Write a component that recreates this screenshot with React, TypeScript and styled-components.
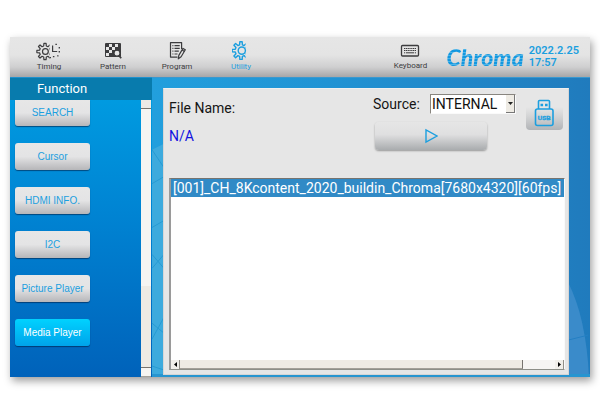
import React from "react";
import styled, { createGlobalStyle, css } from "styled-components";

const BLUE = "#1c9fdf";
const INK = "#3c3c3e";

const GlobalStyle = createGlobalStyle`
  *, *::before, *::after { box-sizing: border-box; }
  body { margin: 0; background: #fff; font-family: Roboto, "Liberation Sans", sans-serif; }
  button, select { font: inherit; margin: 0; padding: 0; border: 0; }
  ul { list-style: none; margin: 0; padding: 0; }
`;

const Page = styled.div`
  min-height: 100vh;
  display: flex;
  padding: 37px 10px 23px;
`;

const Device = styled.div`
  flex: 1;
  min-width: 0;
  display: flex;
  flex-direction: column;
  box-shadow: 2px 4px 8px rgba(0, 0, 0, 0.38);
`;

const Toolbar = styled.header`
  height: 40px;
  display: flex;
  align-items: stretch;
  padding: 0 11px 0 7px;
  background: linear-gradient(#e6e6e6 0%, #e4e4e4 45%, #cfcfd0 75%, #a6a6a8 100%);
`;

const Tabs = styled.nav`
  display: flex;
`;

const ToolButton = styled.button<{ $active?: boolean }>`
  width: 64px;
  display: flex;
  flex-direction: column;
  align-items: center;
  justify-content: flex-end;
  gap: 1px;
  padding-bottom: 5px;
  background: none;
  color: ${(p) => (p.$active ? BLUE : INK)};
  font-size: 8px;
  line-height: 10px;
  cursor: pointer;
  svg { display: block; }
`;

const KeyboardButton = styled(ToolButton)`
  margin-left: auto;
  padding-bottom: 6px;
`;

const Logo = styled.div`
  align-self: center;
  padding: 0 2px 0 4px;
  font: italic 900 23px/32px Lato, "Open Sans", sans-serif;
  color: transparent;
  background: repeating-linear-gradient(#1398e0 0 2px, #4db4e8 2px 3px);
  background-clip: text;
  -webkit-background-clip: text;
`;

const Clock = styled.time`
  align-self: center;
  margin-left: 3px;
  font-size: 11px;
  font-weight: 600;
  line-height: 12px;
  color: ${BLUE};
`;

const Body = styled.div`
  flex: 1;
  display: flex;
  min-height: 0;
`;

const Sidebar = styled.aside`
  flex: none;
  width: 142px;
  display: flex;
  flex-direction: column;
  background: linear-gradient(#009fe3, #0084d3 45%, #0062ba);
`;

const SideTitle = styled.h2`
  margin: 0;
  height: 23px;
  padding-left: 27px;
  border-top: 1px solid #2090cc;
  background: #087bad;
  color: #fff;
  font-size: 13px;
  font-weight: 400;
  line-height: 22px;
`;

const SideScroll = styled.div`
  flex: 1;
  display: flex;
  justify-content: space-between;
  padding: 0 1px 0 5px;
`;

const FunctionList = styled.div`
  width: 75px;
  display: flex;
  flex-direction: column;
  gap: 17px;
`;

const FunctionButton = styled.button<{ $active?: boolean }>`
  height: 27px;
  border-radius: 3px;
  font: 10px/26px "Liberation Sans", Arial, sans-serif;
  white-space: nowrap;
  color: ${BLUE};
  background: linear-gradient(#e7e7e7, #e4e4e5 50%, #b6b6b9);
  box-shadow: 0 1px 1px rgba(0, 30, 70, 0.6);
  cursor: pointer;
  &:first-child { height: 26px; border-radius: 0 0 3px 3px; }
  ${(p) =>
    p.$active &&
    css`
      color: #fff;
      background: linear-gradient(#00d2ff, #00a3ea);
    `}
`;

const VerticalTrack = styled.div`
  width: 10px;
  display: grid;
  grid-template-rows: 9px 177fr 81fr 10px;
  background: #f6f5f2;
`;

const TrackPiece = styled.div<{ $thumb?: boolean }>`
  background: ${(p) => (p.$thumb ? "#eeebe4" : "#f6f5f2")};
  &:first-child { background: #eceae6; border-bottom: 1px solid #77746e; }
  &:last-child { border-top: 1px solid #77746e; border-bottom: 1px solid #a5a29b; }
`;

const Main = styled.main`
  position: relative;
  flex: 1;
  min-width: 0;
  display: flex;
  padding: 10px 21px 2px 11px;
  border-top: 1px solid #3a98cf;
  background: linear-gradient(90deg, #229fdd, #2093d4 40%, #207bbd);
`;

const Backdrop = styled.svg`
  position: absolute;
  inset: 0;
  width: 100%;
  height: 100%;
`;

const Panel = styled.section`
  position: relative;
  flex: 1;
  min-width: 0;
  display: flex;
  flex-direction: column;
  padding: 4px 3px 4px 5px;
  border: 1px solid #d6d6d6;
  border-top-color: #efefef;
  background: #e6e6e6;
`;

const Controls = styled.div`
  display: flex;
  justify-content: space-between;
  height: 85px;
`;

const FileInfo = styled.div`
  padding-top: 6px;
  font-size: 14px;
  line-height: 18px;
  color: #151515;
`;

const FileValue = styled.div`
  margin-top: 10px;
  color: #1212e0;
`;

const Actions = styled.div`
  display: flex;
  gap: 10px;
`;

const SourceGroup = styled.div`
  width: 144px;
  display: flex;
  flex-direction: column;
  gap: 8px;
`;

const SourceRow = styled.div`
  display: flex;
  align-items: center;
  justify-content: space-between;
  padding-left: 1px;
`;

const SourceLabel = styled.label`
  font-size: 14px;
  line-height: 18px;
  color: #151515;
`;

const SelectFrame = styled.div`
  display: flex;
  width: 86px;
  height: 20px;
  margin-top: 1px;
  border: 1px solid #fafafa;
  border-top-color: #88857f;
  border-left-color: #88857f;
  background: #fff;
`;

const SourceSelect = styled.select`
  appearance: none;
  flex: 1;
  min-width: 0;
  padding-left: 1px;
  background: transparent;
  color: #111;
  font-size: 14px;
`;

const SelectArrow = styled.span`
  flex: none;
  width: 9px;
  display: grid;
  place-items: center;
  background: #eeebe4;
  border-right: 1px solid #777;
  border-bottom: 1px solid #777;
`;

const PlayButton = styled.button`
  height: 28px;
  margin: 0 28px 0 3px;
  width: 112px;
  display: grid;
  place-items: center;
  border-radius: 4px;
  background: linear-gradient(#e6e6e6, #dfdfe0 45%, #a9acae);
  box-shadow: 0 1px 2px rgba(0, 0, 0, 0.35);
  cursor: pointer;
`;

const UsbButton = styled.button`
  width: 37px;
  height: 33px;
  margin: 4px 2px 0 0;
  display: grid;
  place-items: center;
  border-radius: 4px;
  background: linear-gradient(#e6e6e6 30%, #d2d3d4 60%, #b2b4b7);
  cursor: pointer;
`;

const FileBox = styled.div`
  flex: 1;
  display: flex;
  flex-direction: column;
  justify-content: space-between;
  min-height: 120px;
  border: 1px solid #fafafa;
  border-top-color: #77746f;
  border-left: 2px solid #9a9a9a;
  border-bottom-color: #8d8f88;
  background: #fff;
`;

const FileRow = styled.li`
  height: 18px;
  padding-left: 2px;
  overflow: hidden;
  white-space: nowrap;
  background: #318ac6;
  color: #fff;
  font-size: 14px;
  line-height: 18px;
`;

const HorizontalTrack = styled.div`
  height: 9px;
  display: flex;
  justify-content: space-between;
  background: #f6f5f3;
`;

const ArrowButton = styled.button`
  width: 9px;
  display: grid;
  place-items: center;
  background: #f0eee9;
  border-right: 1px solid #918e87;
`;

const HorizontalThumb = styled.div`
  flex: 1;
  margin-right: 32px;
  background: #eeebe4;
  border-right: 1px solid #77746f;
  border-bottom: 1px solid #a3a099;
`;

const gearPath = (cx: number, cy: number, outer: number, inner: number) => {
  const pts: string[] = [];
  const teeth = 8;
  for (let i = 0; i < teeth; i += 1) {
    [
      [-0.3, inner],
      [-0.17, outer],
      [0.17, outer],
      [0.3, inner],
    ].forEach(([offset, r]) => {
      const a = ((i + offset) / teeth) * Math.PI * 2;
      pts.push(`${(cx + Math.sin(a) * r).toFixed(2)} ${(cy - Math.cos(a) * r).toFixed(2)}`);
    });
  }
  return `M${pts.join("L")}Z`;
};

const TimingIcon = () => (
  <svg width="26" height="20" viewBox="0 0 26 20" fill="none" stroke="currentColor" strokeWidth="1.2" strokeLinejoin="round">
    <clipPath id="timing-gear">
      <path d="M0 0h13.6v20H0z" />
    </clipPath>
    <path d={gearPath(9, 10.5, 8.2, 5.6)} clipPath="url(#timing-gear)" />
    <circle cx="9.4" cy="10.5" r="2.9" />
    <path d="M16.6 4.5v6h4.6" />
    <path d="M19.4 3.4h1.5M23.3 6v1.5M23.3 10v1.5M22.4 14.4l-1 .9M18.4 15.6h-1.5M15 16.6h-1.4" strokeWidth="1.3" />
  </svg>
);

const PatternIcon = () => (
  <svg width="18" height="20" viewBox="0 0 18 20">
    <rect x="1" y="2" width="16" height="14" rx="1" fill="currentColor" />
    <path d="M5 3h3v3H5zM11 3h3v3h-3zM2 6h3v3H2zM8 6h3v3H8zM5 9h3v3H5zM2 12h3v3H2z" fill="#e6e6e6" />
    <circle cx="13" cy="12.2" r="3" fill="#e6e6e6" stroke="currentColor" strokeWidth="1.2" />
    <path d="M15 14.6l2.2 2.6" stroke="currentColor" strokeWidth="1.7" />
  </svg>
);

const ProgramIcon = () => (
  <svg width="18" height="20" viewBox="0 0 18 20" fill="none" stroke="currentColor" strokeWidth="1.2" strokeLinejoin="round">
    <path d="M13.6 8V1.6H2.5v14.5h7" />
    <path d="M4.4 4.6h1M6.5 4.6h5.2M4.4 7.4h1M6.5 7.4h5.2M4.4 10.2h1M6.5 10.2h4.3M4.4 13h1M6.5 13h3" />
    <path d="M10.8 14.4l4.2-7 2.3 1.4-4.2 7-2.8 2z" />
    <path d="M14.1 8.9l2.3 1.5" />
  </svg>
);

const UtilityIcon = () => (
  <svg width="18" height="20" viewBox="0 0 18 20" fill="none" stroke="currentColor" strokeWidth="1.4" strokeLinejoin="round">
    <clipPath id="utility-gear">
      <path d="M0 0h13.6v20H0z" />
    </clipPath>
    <path d={gearPath(9, 9.6, 8.9, 5.9)} clipPath="url(#utility-gear)" />
    <circle cx="9.8" cy="9.6" r="3.6" />
  </svg>
);

const KeyboardIcon = () => (
  <svg width="20" height="16" viewBox="0 0 20 16" fill="none" stroke="currentColor">
    <rect x="1.5" y="1.5" width="17" height="10.5" rx="1" strokeWidth="1.3" />
    <path d="M4 4.5h12M4 6.5h12" strokeDasharray="1.3 .5" />
    <path d="M4 8.8h1.2M6 8.8h8M14.8 8.8H16" />
  </svg>
);

const PlayIcon = () => (
  <svg width="14" height="16" viewBox="0 0 14 16" fill="none" stroke={BLUE} strokeWidth="1.4">
    <path d="M2 2v12L13 8z" />
  </svg>
);

const UsbIcon = () => (
  <svg width="21" height="29" viewBox="0 0 21 29" fill="none" stroke={BLUE} strokeWidth="1.6">
    <path d="M4.5 10V2.5q0-1 1-1h9q1 0 1 1V10" />
    <rect x="1.5" y="10" width="17.5" height="16.5" rx="2" />
    <path d="M6.5 6h2.6M11 6h2.6" strokeWidth="2.6" />
    <text x="10.2" y="20.5" textAnchor="middle" fill={BLUE} stroke={BLUE} strokeWidth=".4" fontFamily="Liberation Sans, sans-serif" fontSize="6" fontWeight="700">USB</text>
  </svg>
);

const tools = [
  { label: "Timing", Icon: TimingIcon },
  { label: "Pattern", Icon: PatternIcon },
  { label: "Program", Icon: ProgramIcon },
  { label: "Utility", Icon: UtilityIcon },
];

const functions = ["SEARCH", "Cursor", "HDMI INFO.", "I2C", "Picture Player", "Media Player"];

export default function App() {
  return (
    <>
      <GlobalStyle />
      <Page>
        <Device>
          <Toolbar>
            <Tabs>
              {tools.map(({ label, Icon }) => (
                <ToolButton key={label} $active={label === "Utility"}>
                  <Icon />
                  {label}
                </ToolButton>
              ))}
            </Tabs>
            <KeyboardButton>
              <KeyboardIcon />
              Keyboard
            </KeyboardButton>
            <Logo>Chroma</Logo>
            <Clock dateTime="2022-02-25T17:57">
              2022.2.25
              <br />
              17:57
            </Clock>
          </Toolbar>
          <Body>
            <Sidebar>
              <SideTitle>Function</SideTitle>
              <SideScroll>
                <FunctionList>
                  {functions.map((name) => (
                    <FunctionButton key={name} $active={name === "Media Player"}>
                      {name}
                    </FunctionButton>
                  ))}
                </FunctionList>
                <VerticalTrack>
                  <TrackPiece />
                  <TrackPiece />
                  <TrackPiece $thumb />
                  <TrackPiece />
                </VerticalTrack>
              </SideScroll>
            </Sidebar>
            <Main>
              <Backdrop viewBox="0 0 438 300" preserveAspectRatio="none" aria-hidden="true">
                <path d="M0 72L12 66V300H0z" fill="#3daadd" />
                <path d="M0 72l12 18M0 106l12-7M0 150l12-7M0 177l12 14M12 177L0 191M0 262l12-22M0 246l12 10M0 289l12 4" stroke="#279bd3" fill="none" />
                <path d="M416 205Q434 240 437 300H416z" fill="#3a8bca" />
                <path d="M416 263l20-5" stroke="#2480c4" />
                <path d="M0 297H438V300H0z" fill="#2795d0" />
              </Backdrop>
              <Panel>
                <Controls>
                  <FileInfo>
                    File Name:
                    <FileValue>N/A</FileValue>
                  </FileInfo>
                  <Actions>
                    <SourceGroup>
                      <SourceRow>
                        <SourceLabel htmlFor="source">Source:</SourceLabel>
                        <SelectFrame>
                          <SourceSelect id="source" defaultValue="INTERNAL">
                            <option>INTERNAL</option>
                          </SourceSelect>
                          <SelectArrow>
                            <svg width="5" height="3" viewBox="0 0 5 3">
                              <path d="M0 0h5L2.5 3z" fill="#222" />
                            </svg>
                          </SelectArrow>
                        </SelectFrame>
                      </SourceRow>
                      <PlayButton aria-label="Play">
                        <PlayIcon />
                      </PlayButton>
                    </SourceGroup>
                    <UsbButton aria-label="USB">
                      <UsbIcon />
                    </UsbButton>
                  </Actions>
                </Controls>
                <FileBox>
                  <ul role="listbox" aria-label="Files">
                    <FileRow role="option" aria-selected="true">
                      [001]_CH_8Kcontent_2020_buildin_Chroma[7680x4320][60fps]
                    </FileRow>
                  </ul>
                  <HorizontalTrack>
                    <ArrowButton aria-label="Scroll left">
                      <svg width="3" height="5" viewBox="0 0 3 5"><path d="M3 0v5L0 2.5z" fill="#000" /></svg>
                    </ArrowButton>
                    <HorizontalThumb />
                    <ArrowButton aria-label="Scroll right">
                      <svg width="3" height="5" viewBox="0 0 3 5"><path d="M0 0v5l3-2.5z" fill="#000" /></svg>
                    </ArrowButton>
                  </HorizontalTrack>
                </FileBox>
              </Panel>
            </Main>
          </Body>
        </Device>
      </Page>
    </>
  );
}
